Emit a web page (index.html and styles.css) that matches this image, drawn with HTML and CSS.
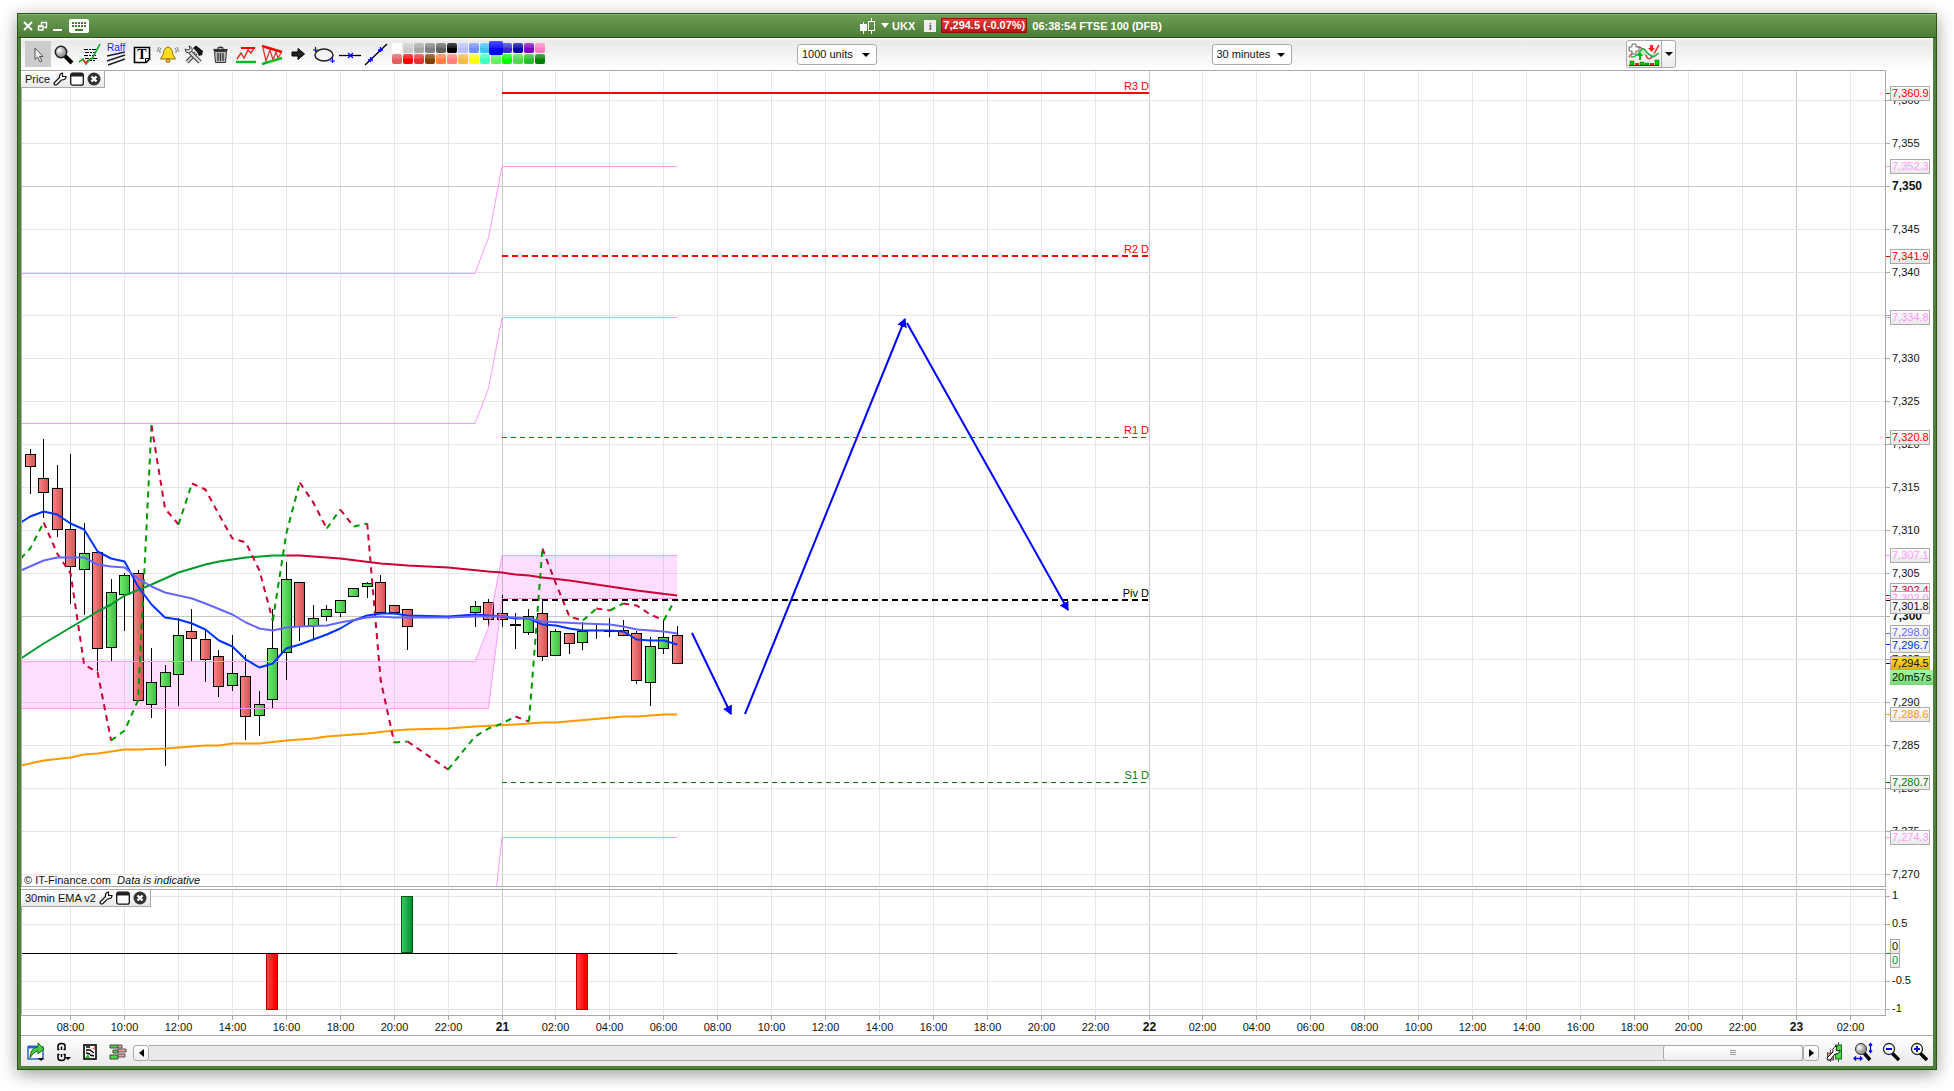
FILE: index.html
```html
<!DOCTYPE html>
<html lang="en">
<head>
<meta charset="utf-8">
<title>UKX 7,294.5 (-0.07%) FTSE 100 (DFB)</title>
<link rel="stylesheet" href="styles.css">
</head>
<body>
<svg class="defs" width="0" height="0" aria-hidden="true">
  <defs>
    <linearGradient id="candle-down"><stop offset="0" stop-color="#f98585"/><stop offset="1" stop-color="#d25252"/></linearGradient>
    <linearGradient id="candle-up"><stop offset="0" stop-color="#70ec70"/><stop offset="1" stop-color="#3fbd3f"/></linearGradient>
    <linearGradient id="bar-down"><stop offset="0.2" stop-color="#ff3838"/><stop offset="0.8" stop-color="#ff0000"/></linearGradient>
    <linearGradient id="bar-up"><stop offset="0" stop-color="#34cf62"/><stop offset="1" stop-color="#008a2c"/></linearGradient>
    <linearGradient id="tag" x2="0" y2="1"><stop offset="0" stop-color="#ffffff"/><stop offset="1" stop-color="#e8e8e8"/></linearGradient>
    <linearGradient id="tag-last" x2="0" y2="1"><stop offset="0" stop-color="#ffe030"/><stop offset="1" stop-color="#e8a800"/></linearGradient>
    <linearGradient id="tag-time" x2="0" y2="1"><stop offset="0" stop-color="#a0f8a0"/><stop offset="1" stop-color="#78d878"/></linearGradient>
    <radialGradient id="glass" cx="0.35" cy="0.35"><stop offset="0" stop-color="#fff"/><stop offset="1" stop-color="#999"/></radialGradient>
    <marker id="arrow" markerUnits="userSpaceOnUse" markerWidth="12" markerHeight="12" refX="8" refY="5" orient="auto"><path d="M0 0L9 5L0 10z" fill="#00f"/></marker>
    <symbol id="i-wrench" viewBox="0 0 14 14"><path d="M1.500 12.500Q.5 11.500 1.500 10.500L6.500 5.500Q6 1.500 9.500 1V4.500H13Q13 8 8.500 8L4 12.500Q2.500 13.500 1.500 12.500z" fill="#fff" stroke="#111" stroke-width="1.200"/></symbol>
    <symbol id="i-panel" viewBox="0 0 14 14"><rect x=".7" y="1.200" width="12.600" height="12" rx="2" fill="#fff" stroke="#111" stroke-width="1.300"/><path d="M1 1H13V4.500H1z" fill="#222"/></symbol>
    <symbol id="i-close" viewBox="0 0 14 14"><circle cx="7" cy="7" r="6.500" fill="#333"/><path d="M4.500 4.500L9.500 9.500M9.500 4.500L4.500 9.500" stroke="#fff" stroke-width="2.400"/></symbol>
  </defs>
</svg>

<main class="window">
  <header class="titlebar">
    <div class="win-buttons">
      <button aria-label="Close"><svg width="12" height="12"><path d="M2 2L10 10M10 2L2 10" stroke="#fff" stroke-width="2"/></svg></button>
      <button aria-label="Restore"><svg width="12" height="12"><path d="M4.500 5V2.500H9.500V7.500H7M1.500 6H6V10H1.500zM1 6.500H6.500M4 2.500H10" fill="none" stroke="#fff" stroke-width="1.400"/></svg></button>
      <button aria-label="Minimise"><svg width="12" height="12"><path d="M1 10H10" stroke="#fff" stroke-width="2"/></svg></button>
      <button aria-label="Keyboard" class="wide"><svg width="20" height="14"><rect width="20" height="14" rx="2" fill="#fff"/><path d="M3 4H17M3 7H17" stroke="#4a7a34" stroke-width="2" stroke-dasharray="2 1"/><path d="M6 11H14" stroke="#4a7a34" stroke-width="2"/></svg></button>
    </div>
    <div class="instrument">
      <svg class="candles" width="16" height="16"><rect x="0" y="6" width="7" height="7" fill="#fff"/><path d="M3.500 4V16M11.500 0V3M11.500 13V16" stroke="#fff"/><rect x="8.500" y="3.500" width="6" height="9" fill="none" stroke="#fff"/></svg>
      <svg class="caret" width="8" height="5"><path d="M0 0H8L4 5z" fill="#fff"/></svg>
      <strong class="ticker">UKX</strong>
      <button class="info" aria-label="Information">i</button>
      <span class="quote">7,294.5 (-0.07%)</span>
      <span class="name">06:38:54 FTSE 100 (DFB)</span>
    </div>
  </header>

  <div class="toolbar">
    <div class="tools">
      <button class="active" aria-label="Pointer"><svg width="24" height="24"><path d="M9 6V17.500L11.500 15L14 20L16 19L13.500 14.500H17z" fill="#eee" stroke="#555"/></svg></button>
      <button aria-label="Zoom"><svg width="24" height="24"><path d="M13 14L20 21" stroke="#000" stroke-width="4"/><circle cx="9" cy="10" r="5.700" fill="url(#glass)" stroke="#222" stroke-width="1.500"/></svg></button>
      <button aria-label="Indicator"><svg width="24" height="24"><path d="M6 7.500H19M7 10.500H17M6 13.500H19M7 16.500H19M10 18.500H18" stroke="#000" stroke-width="1.200" stroke-dasharray="4 1 2 1"/><path d="M1 20L5 17L8 22L12 17H14L22 2" fill="none" stroke="#10b030" stroke-width="1.600"/><path d="M5 18L8 21L10 18" fill="none" stroke="#f22" stroke-width="1.500"/></svg></button>
      <button aria-label="Raff channel"><svg width="24" height="24"><text class="raff" x="3" y="9">Raff</text><path d="M3 14L21 10M3 19L21 13M4 23L21 17" stroke="#222" stroke-width="1.500"/></svg></button>
      <button aria-label="Text"><svg width="24" height="24"><path d="M4.500 5.500H19.500V17L16 20.500H4.500z" fill="#fff" stroke="#000" stroke-width="1.600"/><path d="M15.500 20V16.500H19" fill="none" stroke="#000"/><text class="tee" x="12" y="17">T</text></svg></button>
      <button aria-label="Alert"><svg width="24" height="24"><path d="M12 5Q16.500 6 17 13L19.500 17H4.500L7 13Q7.500 6 12 5z" fill="#fd2" stroke="#9a7400"/><circle cx="12" cy="18.500" r="2" fill="#fb0" stroke="#864"/><path d="M5 6Q3 8 4 11M3 5Q1 8 2 10M19 6Q21 8 20 11M21 5Q23 8 22 10" fill="none" stroke="#777"/></svg></button>
      <button aria-label="Tools"><svg width="24" height="24"><path d="M14 11L5 20" stroke="#444" stroke-width="4"/><path d="M14 11L5 20" stroke="#ccc" stroke-width="2"/><path d="M11 6L14 3.500L21 9L20 13L17 14L15 10z" fill="#111"/><path d="M8 10L18 20" stroke="#444" stroke-width="4.500"/><path d="M8 10L18 20" stroke="#ddd" stroke-width="2.300"/><path d="M3 7Q3 11 7 11L10 9Q11 5 7 4L8 7L6 8z" fill="#ddd" stroke="#444"/></svg></button>
      <button aria-label="Delete"><svg width="24" height="24"><path d="M6.500 9.500H18.500L17.500 20.500H7.500z" fill="#bbb" stroke="#333"/><path d="M5.500 8H19.500" stroke="#333" stroke-width="2.200"/><path d="M9.500 6.500Q12.500 4 15.500 6.500M10 11V19M12.500 11V19M15 11V19" fill="none" stroke="#333" stroke-width="1.300"/></svg></button>
      <button aria-label="Patterns"><svg width="24" height="24"><path d="M3 17L7 11L10 16L14 8L17 11L20 6" fill="none" stroke="#e22" stroke-width="1.400"/><path d="M7 6H21" stroke="#f00" stroke-width="2"/><path d="M2 20H22" stroke="#0b2" stroke-width="2.400"/></svg></button>
      <button aria-label="Triangle patterns"><svg width="24" height="24"><path d="M3 6L6 19L10 8L13 18L16 10L18 16L21 11" fill="none" stroke="#e33" stroke-width="1.300"/><path d="M2 4L22 10" stroke="#f00" stroke-width="2.400"/><path d="M2 22L22 16" stroke="#0b2" stroke-width="2.400"/></svg></button>
      <button aria-label="Arrow"><svg width="24" height="24"><path d="M6 10H12V6.500L18.500 12L12 17.500V14H6z" fill="#222" stroke="#000"/></svg></button>
      <button aria-label="Ellipse"><svg width="24" height="24"><ellipse cx="12" cy="13" rx="9" ry="6" fill="none" stroke="#222" stroke-width="1.500"/><path d="M1 8H6M3.500 5V10M18 19H23M20.500 16V21" stroke="#00f" stroke-width="1.200"/></svg></button>
      <button aria-label="Horizontal line"><svg width="24" height="24"><path d="M1 13.500H23" stroke="#000" stroke-width="1.300"/><path d="M10 11L15 16M15 11L10 16" stroke="#00f" stroke-width="1.200"/></svg></button>
      <button aria-label="Trend line"><svg width="24" height="24"><path d="M1 23L23 2" stroke="#000" stroke-width="1.400"/><path d="M4 18H9M6.500 15V20M14 8H19M16.500 5V10" stroke="#00f" stroke-width="1.300"/></svg></button>
    </div>
    <div class="palette" id="palette"></div>
    <span class="gap3"></span>
    <label class="drop"><select aria-label="Number of units"><option>1000 units</option></select></label>
    <span class="gap4"></span>
    <label class="drop"><select aria-label="Timeframe"><option>30 minutes</option></select></label>
    <span class="gap4"></span>
    <div class="split">
      <button aria-label="Add indicator"><svg width="32" height="24"><path d="M1 15L10 5Q15 5 18 13Q20 20 25 14Q28 8 31 3" fill="none" stroke="#d44" stroke-width="1.600"/><path d="M3 15Q9 15 13 8Q15 5 18 9Q23 16 27 14L31 11" fill="#bfe8bf" stroke="#2a4" stroke-width="1.400"/><path d="M11 18V14H9L12 10L15 14H13V18z" fill="#0b0"/><path d="M22 3H25V6H27L23.500 10L20 6H22z" fill="#f22"/><path d="M4 2H8V5H11V9H8V12H4V9H1V5H4z" fill="#fff" stroke="#666"/><path d="M2 19H6V23H2zM12 20H16V23H12zM17 21H21V23H17zM27 18H31V23H27z" fill="#0c0" stroke="#060" stroke-width=".5"/><path d="M7 21H11V23H7zM22 21H26V23H22z" fill="#d22"/><path d="M1 23.500H31" stroke="#22f"/></svg></button>
      <button aria-label="More indicators" class="more"><svg width="8" height="4"><path d="M0 0H8L4 4z"/></svg></button>
    </div>
    <span class="gap3"></span>
  </div>

  <section class="pane price">
    <svg class="plot" id="price" role="img" aria-label="Price chart"></svg>
    <div class="tab"><span>Price</span>
      <button aria-label="Price settings"><svg width="14" height="14"><use href="#i-wrench"/></svg></button>
      <button aria-label="Detach price"><svg width="14" height="14"><use href="#i-panel"/></svg></button>
      <button aria-label="Close price"><svg width="14" height="14"><use href="#i-close"/></svg></button>
    </div>
    <p class="credit">© IT-Finance.com&nbsp; <em>Data is indicative</em></p>
  </section>
  <section class="pane signal">
    <svg class="plot" id="signal" role="img" aria-label="30min EMA v2"></svg>
    <div class="tab"><span>30min EMA v2</span>
      <button aria-label="EMA settings"><svg width="14" height="14"><use href="#i-wrench"/></svg></button>
      <button aria-label="Detach EMA"><svg width="14" height="14"><use href="#i-panel"/></svg></button>
      <button aria-label="Close EMA"><svg width="14" height="14"><use href="#i-close"/></svg></button>
    </div>
  </section>
  <section class="pane times">
    <svg class="plot" id="times" role="img" aria-label="Time axis"></svg>
  </section>

  <footer class="bottombar">
    <div class="left">
      <button aria-label="Export"><svg width="20" height="20"><rect x="2" y="5" width="15" height="12" fill="#fff" stroke="#26c" stroke-width="1.500"/><path d="M2 5H11" stroke="#26c" stroke-width="3"/><path d="M4 16Q4 6 12 5V1L18 7L12 12V9Q8 9 4 16z" fill="#4c4" stroke="#186818"/><path d="M12 16H18L15 19z"/></svg></button>
      <button aria-label="Link"><svg width="20" height="20"><path d="M6.500 7.500H5V4Q5 1.500 8.500 1.500T12 4V7.500H10.500M6.500 12.500H5V16Q5 18.500 8.500 18.500T12 16V12.500H10.500M8.500 4.500V8M8.500 12V15" fill="none" stroke="#000" stroke-width="1.500"/><path d="M12 15H18L15 18z"/></svg></button>
      <button aria-label="News"><svg width="20" height="20"><rect x="4" y="3" width="12" height="14" fill="#fff" stroke="#000" stroke-width="1.600"/><path d="M9 5L12 7L15 4L15 8z" fill="#f66"/><path d="M5 16L8 12L10 16z" fill="#3b3"/><path d="M6 5H10M6 8L10 8L14 11M6 11L10 12M10 13L14 14" stroke="#000" stroke-width="1.400" fill="none"/></svg></button>
      <button aria-label="Order book"><svg width="20" height="20"><path d="M3 3H11V6H3zM6 8H11V11H6zM3 13H11V17H3z" fill="#4d4" stroke="#444"/><path d="M11 3H15V6H11zM11 7H19V10H11zM11 12H18V15H11z" fill="#f99" stroke="#555"/></svg></button>
    </div>
    <div class="scroll">
      <button aria-label="Scroll left"><svg width="5" height="8"><path d="M5 0V8L0 4z"/></svg></button>
      <div class="track"><div class="thumb"><svg width="6" height="6"><path d="M0 .5H6M0 2.500H6M0 4.500H6" stroke="#999"/></svg></div></div>
      <button aria-label="Scroll right"><svg width="5" height="8"><path d="M0 0V8L5 4z"/></svg></button>
    </div>
    <div class="right">
      <button aria-label="Chart settings"><svg width="20" height="20"><path d="M5.500 8V20M13.500 0V20" stroke="#555"/><rect x="2.500" y="11" width="6" height="7" fill="#d77" stroke="#555"/><rect x="10.500" y="3" width="6" height="14" fill="#4d4" stroke="#262"/><path d="M3 18L2 16L8 10Q7 5 12 4L11 8L13 9L15 8Q15 12 10 12L5 18z" fill="#fff" stroke="#111"/></svg></button>
      <button aria-label="Fit"><svg width="20" height="20"><path d="M11 11L17 18" stroke="#000" stroke-width="3.500"/><circle cx="8" cy="7" r="5.500" fill="url(#glass)" stroke="#333"/><path d="M17.500 2V10M16 3.500L17.500 1.500L19 3.500M16 8.500L17.500 10.500L19 8.500M1 16.500H9M3 14.500L1 16.500L3 18.500M7 14.500L9 16.500L7 18.500" fill="none" stroke="#00f" stroke-width="1.300"/></svg></button>
      <button aria-label="Zoom out"><svg width="20" height="20"><path d="M11 11L18 18" stroke="#000" stroke-width="3.500"/><circle cx="8" cy="7" r="5.500" fill="#fff" stroke="#222" stroke-width="1.300"/><path d="M5 7H11" stroke="#00f" stroke-width="2"/></svg></button>
      <button aria-label="Zoom in"><svg width="20" height="20"><path d="M11 11L18 18" stroke="#000" stroke-width="3.500"/><circle cx="8" cy="7" r="5.500" fill="#fff" stroke="#222" stroke-width="1.300"/><path d="M5 7H11M8 4V10" stroke="#00f" stroke-width="2"/></svg></button>
    </div>
  </footer>
</main>
<script src="chart.js"></script>
</body>
</html>
```
FILE: styles.css
```css
* { box-sizing: border-box; }

body {
  margin: 0;
  min-height: 100vh;
  padding: 13px 17px 21px;
  display: flex;
  background: #fff;
  color: #111;
  font: 11px/14px "Liberation Sans", Arial, sans-serif;
}

button {
  display: flex;
  align-items: center;
  justify-content: center;
  padding: 0;
  border: 0;
  background: none;
  font: inherit;
  color: inherit;
}

svg { display: block; flex: none; }
.defs { position: absolute; }

.window {
  flex: 1;
  min-width: 0;
  display: flex;
  flex-direction: column;
  padding: 0 3px 3px;
  border: 1px solid #2a5715;
  background: #50813a;
  box-shadow: 0 4px 16px rgba(0, 0, 0, 0.4);
}

/* title bar */
.titlebar {
  display: flex;
  align-items: center;
  height: 24px;
  margin: 0 -3px;
  padding: 0 3px 1px;
  border-top: 1px solid #84b36c;
  border-bottom: 1px solid #2a5715;
  background: linear-gradient(#6c9d55, #4d7c36);
  color: #fff;
  font-weight: bold;
}
.win-buttons { display: flex; gap: 3px; padding-left: 1px; }
.win-buttons .wide { margin-left: 2px; }
.instrument {
  flex: 1;
  display: flex;
  align-items: center;
  justify-content: center;
}
.caret { margin: 0 3px 0 5px; }
.ticker { margin-right: 9px; }
.info {
  width: 12px;
  height: 12px;
  margin-right: 5px;
  background: #eee;
  color: #666;
  font: bold 11px/12px "Liberation Serif", serif;
}
.quote {
  height: 15px;
  margin-right: 5px;
  padding: 0 1px;
  border: 1px solid #980c0c;
  background: linear-gradient(#e63c3c, #b81414);
  line-height: 13px;
}

/* tool bar */
.toolbar {
  display: flex;
  align-items: center;
  height: 32px;
  padding: 0 6px 0 4px;
  background: linear-gradient(#fff, #e9e9e9 10%, #fff);
}
.tools { display: flex; }
.tools button { width: 26px; height: 26px; }
.tools .active { background: #ccc; }
.raff { font: 10px "Liberation Sans", Arial, sans-serif; fill: #22f; }
.tee { font: bold 14px "Liberation Serif", serif; text-anchor: middle; }
.palette {
  display: grid;
  grid-template-columns: repeat(14, 11px);
  grid-auto-rows: 11px;
  margin-left: 3px;
}
.palette button {
  width: 10px;
  height: 10px;
  border-radius: 2px;
  background-image: linear-gradient(rgba(255, 255, 255, 0.3), rgba(255, 255, 255, 0.1) 50%, transparent 50%);
}
.palette .picked {
  width: 14px;
  height: 14px;
  margin: -2px;
  z-index: 1;
}
.gap3 { flex: 3; }
.gap4 { flex: 4; }
.drop { position: relative; }
.drop select {
  appearance: none;
  width: 80px;
  height: 21px;
  padding: 0 4px;
  border: 1px solid #aaa;
  border-radius: 3px;
  background: #fff;
  font: inherit;
  color: inherit;
}
.drop::after {
  content: "";
  position: absolute;
  right: 7px;
  top: 9px;
  border: 4px solid transparent;
  border-top-color: #000;
  border-bottom: 0;
}
.split {
  display: flex;
  height: 28px;
  border: 1px solid #aaa;
  border-radius: 3px;
  background: linear-gradient(#fff, #ededed);
}
.split button { width: 34px; }
.split .more { width: 14px; border-left: 1px solid #aaa; }

/* charts */
.pane { position: relative; background: #fff; }
.pane .plot { position: absolute; width: 100%; height: 100%; }
.price { flex: 1; min-height: 400px; }
.signal { height: 129px; padding-top: 2px; }
.signal .plot { height: 127px; }
.times { height: 20px; border-bottom: 1px solid #aaa; }

.tab {
  position: absolute;
  left: 0;
  top: 1px;
  display: flex;
  align-items: center;
  gap: 3px;
  height: 17px;
  padding: 0 3px 1px 4px;
  border: solid #aaa;
  border-width: 0 1px 1px 0;
  background: linear-gradient(#fff, #e8e8e8);
}
.signal .tab { top: 3px; }
.credit { position: absolute; left: 3px; bottom: 0; margin: 0; }

.plot text { fill: #111; }
.plot .major { font-weight: bold; font-size: 12px; }
.grid, .grid-major, .frame, .tick { shape-rendering: crispEdges; fill: none; }
.grid { stroke: #e6e6e6; }
.grid-major { stroke: #c8c8c8; }
.frame, .tick { stroke: #aaa; }

/* bottom bar */
.bottombar {
  display: flex;
  align-items: center;
  height: 30px;
  padding-top: 2px;
  background: linear-gradient(#fff, #e9e9e9);
}
.left, .right, .scroll { display: flex; }
.left { margin-right: 3px; padding-left: 1px; }
.left button { width: 27px; height: 24px; }
.right { margin-left: 2px; }
.right button { width: 28px; height: 24px; }
.scroll { flex: 1; height: 16px; margin-top: 2px; }
.scroll button {
  width: 16px;
  border: 1px solid #aaa;
  border-radius: 3px;
  background: linear-gradient(#fff, #eee);
}
.track {
  flex: 1;
  display: flex;
  justify-content: flex-end;
  border: solid #aaa;
  border-width: 1px 0;
  background: #e9e9e9;
}
.thumb {
  display: flex;
  align-items: center;
  justify-content: center;
  width: 140px;
  margin: -1px 0;
  border: 1px solid #aaa;
  border-radius: 3px;
  background: linear-gradient(#fff, #eee);
}
```
FILE: chart.js
```js
// Colour palette of the drawing tools
const COLOURS = ['#fff', '#ccc', '#a8a8a8', '#808080', '#606060', '#000', '#b8c0ff', '#7090ff', '#40c0ff', '#00f', '#3030d0', '#0000a0', '#8000c0', '#ff80c0',
  '#e06060', '#f00', '#e83030', '#804000', '#ff8040', '#ff8080', '#ffb840', '#ff0', '#40ffc0', '#60f060', '#0f0', '#50d850', '#30b830', '#008000'];
document.getElementById('palette').innerHTML = COLOURS.map((c, i) =>
  `<button class="${i === 9 ? 'picked' : ''}" aria-label="${c}" style="background-color:${c}"></button>`).join('');

// Bars are half hours counted from midnight of the 21st.
const STEP = 13.48;
const MIDNIGHT = 481;
const AXIS = 48;
const TOP = 70;
const x = k => MIDNIGHT + k * STEP;
const column = k => Math.floor(x(k)) + 0.5;
const y = row => row - TOP;
const priceY = p => Math.round(546 + (7300 - p) * 8.592);

// bar, high, body top, body bottom, low, up (1) or down (0)
const CANDLES = [
  [-35,449,454,466,493,0],[-34,439,478,492,517,0],[-33,465,488,529,536,0],[-32,454,529,566,603,0],
  [-31,523,553,569,614,1],[-30,552,552,648,670,0],[-29,579,592,647,660,1],[-28,573,575,594,630,1],
  [-27,570,573,700,700,0],[-26,648,682,704,717,1],[-25,665,672,686,765,1],[-24,618,635,674,705,1],
  [-23,609,631,638,661,0],[-22,631,639,659,681,0],[-21,650,656,686,696,0],[-20,635,673,685,690,1],
  [-19,655,676,716,739,0],[-18,691,704,715,735,1],[-17,609,648,699,708,1],[-16,562,579,652,679,1],
  [-15,582,582,626,640,0],[-14,605,618,625,639,1],[-13,605,609,616,620,1],[-12,600,600,612,616,1],
  [-11,588,588,596,596,1],[-10,582,583,586,597,1],[-9,575,582,612,612,0],[-8,605,605,612,612,0],
  [-7,609,609,626,649,0],[-4,618,618,618,618,1],[-2,601,606,612,626,1],[-1,599,602,619,626,0],
  [0,595,613,619,626,0],[1,613,624,625,648,1],[2,609,616,632,634,1],[3,600,613,656,660,0],
  [4,629,631,655,655,1],[5,633,633,643,653,0],[6,622,631,642,649,1],[7,624,629,629,638,1],
  [8,618,630,631,636,1],[9,620,630,635,635,0],[10,631,633,680,683,0],[11,637,646,682,705,1],
  [12,620,637,648,653,1],[13,626,635,663,663,0]
];
const FAST = [[-35.7,522],[-35,516],[-34,511],[-33,514],[-32,523],[-31,529],[-30,551],[-29,558],[-28,561],[-27,586],[-26,604],[-25,617],[-24,619],[-23,623],[-22,629],[-21,640],[-20,646],[-19,659],[-18,667],[-17,663],[-16,648],[-15,644],[-14,639],[-13,634],[-12,628],[-11,620],[-10,615],[-9,613],[-8,613],[-7,615],[-4,616],[-2,614],[-1,615],[0,616],[1,618],[2,618],[3,624],[4,625],[5,628],[6,630],[8,630],[9,631],[10,639],[11,640],[12,640],[13,644]];
const SLOW = [[-35.7,570],[-34,560],[-33,557],[-31,557],[-30,564],[-29,566],[-28,567],[-27,578],[-26,586],[-25,592],[-23,598],[-22,603],[-20,614],[-19,622],[-18,628],[-17,630],[-16,627],[-15,626],[-13,625],[-12,622],[-10,617],[-9,616],[-8,617],[-4,617],[-2,616],[0,616],[1,617],[2,618],[3,621],[6,623],[8,624],[9,626],[10,629],[12,631],[13,633]];
const TREND_UP = [[-35.7,658],[-34,643],[-33,635],[-32,627],[-30,611],[-29,604],[-28,595],[-26,584],[-25,578],[-24,572],[-23,568],[-22,564],[-21,561],[-20,559],[-19,557],[-17,555],[-16,555]];
const TREND_DOWN = [[-16,555],[-15,555],[-12,558],[-9,563],[-8,564],[-7,565],[-4,567],[-1,571],[0,572],[1,574],[2,575],[3,577],[5,580],[6,582],[9,588],[10,590],[13,595]];
const LONG = [[-35.7,765],[-34,760],[-32,757],[-31,754],[-30,753],[-28,749],[-27,749],[-25,748],[-24,747],[-22,745],[-21,745],[-20,743],[-18,743],[-16,740],[-14,738],[-13,736],[-10,733],[-8,730],[-7,729],[-4,728],[-2,726],[1,724],[3,722],[4,722],[9,716],[10,716],[12,714],[13,714]];
const SWING = [[-35.7,558],[-35,548],[-34,522],[-33,553],[-32,573],[-31,664],[-30,672],[-29,740],[-28,730],[-27,700],[-26,425],[-25,508],[-24,524],[-23,483],[-22,489],[-21,514],[-20,538],[-19,542],[-18,570],[-17,620],[-16,533],[-15,482],[-14,502],[-13,528],[-12,509],[-11,526],[-10,523],[-9,680],[-8,742],[-7,741],[-4,769],[-2,736],[-1,728],[0,723],[1,716],[2,721],[3,548],[4,583],[5,616],[6,620],[7,608],[8,610],[9,603],[10,605],[11,614],[12,620],[12.8,600]];
const BAND_TOP = [[-35.7,661],[-2,661],[-1,627],[0,555],[13,555]];
const BAND_BOTTOM = [[-35.7,708],[-1,708],[0,598],[13,598]];
const PINK = [BAND_TOP, BAND_BOTTOM,
  [[-35.7,273],[-2,273],[-1,237],[0,166],[13,166]],
  [[-35.7,423],[-2,423],[-1,388],[0,317],[13,317]],
  [[-0.4,886],[0,837],[13,837]]];
// label, row, colour, thickness, dash pattern
const PIVOTS = [['R3 D',93,'#f00',2,''],['R2 D',256,'#f00',2,'6 4'],['R1 D',437,'#f00',1,'5 4'],['Piv D',600,'#000',2,'6 4'],['S1 D',782,'#008000',1,'5 4']];
const ARROWS = [[692,633,731,714],[745,714,905,319],[907,323,1068,610]];
// text, box row, tick row, colour
const TAGS = [['7,360.9',86,93,'#f00'],['7,352.3',159,166,'#f9f'],['7,341.9',249,256,'#f00'],['7,334.8',310,317,'#f9f'],
  ['7,320.8',430,437,'#f00'],['7,307.1',548,555,'#f9f'],['7,302.4',583,595,'#c8003c'],['7,302.0',591,598,'#f9f'],
  ['7,301.8',599,600,'#111'],['7,298.0',625,633,'#6a6aff'],['7,296.7',638,644,'#0030ff'],['7,294.5',656,663,'#111','tag-last'],
  ['7,288.6',707,714,'#ff9900'],['7,280.7',775,782,'#008000'],['7,274.3',830,837,'#f9f']];

const points = list => list.map(([k, r]) => `${x(k).toFixed(1)},${y(r) + 0.5}`).join(' ');
const poly = (list, colour, width, dash) =>
  `<polyline points="${points(list)}" fill="none" stroke="${colour}" stroke-width="${width}" stroke-linejoin="round"${dash ? ` stroke-dasharray="${dash}"` : ''}/>`;
const line = (cls, x1, y1, x2, y2, extra = '') =>
  `<path class="${cls}" d="M${x1} ${y1}L${x2} ${y2}" ${extra}/>`;
const tag = (left, top, width, text, colour, fill = 'tag') =>
  `<rect x="${left + 0.5}" y="${top + 0.5}" width="${width}" height="14" fill="url(#${fill})" stroke="#aaa"/>` +
  `<text x="${left + 2}" y="${top + 11}" style="fill:${colour}">${text}</text>`;

function verticals(right, height) {
  let out = '';
  for (let k = -32; x(k) < right; k += 4) {
    out += line(k % 48 === 0 ? 'grid-major' : 'grid', column(k), 0, column(k), height);
  }
  return out;
}

// Runs of rising and falling points get a colour each.
function swing() {
  let out = '', run = [SWING[0]], rising = true;
  for (let i = 1; i < SWING.length; i++) {
    const up = SWING[i][1] < SWING[i - 1][1];
    if (up !== rising) {
      out += poly(run, rising ? '#009a00' : '#cc0033', 2, '6 5');
      run = [SWING[i - 1]];
      rising = up;
    }
    run.push(SWING[i]);
  }
  return out + poly(run, rising ? '#009a00' : '#cc0033', 2, '6 5');
}

function drawPrice() {
  const svg = document.getElementById('price');
  const right = svg.clientWidth - AXIS;
  const height = svg.clientHeight;
  let out = verticals(right, height), labels = '';
  for (let p = 7360; p >= 7270; p -= 5) {
    const py = priceY(p) + 0.5, major = p % 50 === 0;
    out += line(major ? 'grid-major' : 'grid', 0, py, right, py);
    labels += line('tick', right, py, right + 5, py) +
      `<text x="${right + 7}" y="${py + 3.5}" class="${major ? 'major' : ''}">${p.toLocaleString('en-US')}</text>`;
  }
  out += `<polygon points="${points(BAND_TOP)} ${points([...BAND_BOTTOM].reverse())}" fill="rgba(255,0,255,0.13)"/>`;
  for (const [k, high, top, bottom, low, up] of CANDLES) {
    const cx = column(k);
    out += `<path d="M${cx} ${y(high)}V${y(low) + 1}" stroke="#000"/>` +
      `<rect x="${cx - 5}" y="${y(top) + 0.5}" width="10" height="${bottom - top}" fill="url(#candle-${up ? 'up' : 'down'})" stroke="#000"/>`;
  }
  out += PINK.map(l => poly(l, '#ff99ff', 1)).join('');
  out += poly(LONG, '#ff9900', 2) + poly(TREND_UP, '#00992e', 2) + poly(TREND_DOWN, '#cc0033', 2) + swing();
  for (const [name, row, colour, width, dash] of PIVOTS) {
    const py = y(row) + (width === 1 ? 0.5 : 0);
    out += line('', x(0), py, x(48), py, `stroke="${colour}" stroke-width="${width}" stroke-dasharray="${dash}"`) +
      `<text x="${x(48)}" y="${y(row) - 3}" text-anchor="end" style="fill:${colour}">${name}</text>`;
  }
  out += poly(FAST, '#0033ff', 2) + poly(SLOW, '#6666ff', 2);
  for (const [x1, y1, x2, y2] of ARROWS) {
    out += line('', x1 - 21, y(y1), x2 - 21, y(y2), 'stroke="#00f" stroke-width="2" marker-end="url(#arrow)"');
  }
  out += labels;
  for (const [text, row, at, colour, fill] of TAGS) {
    out += line('tick', right, y(at) + 0.5, right + 5, y(at) + 0.5, `style="stroke:${colour}"`) + tag(right + 5, y(row), 39, text, colour, fill);
  }
  out += `<rect x="${right + 5}" y="600" width="43" height="15" fill="url(#tag-time)"/><text x="${right + 7}" y="611">20m57s</text>`;
  out += `<path class="frame" d="M0 .5H${right + 0.5}V${height - 0.5}H.5V1"/>`;
  svg.innerHTML = out;
}

function drawSignal() {
  const svg = document.getElementById('signal');
  const right = svg.clientWidth - AXIS;
  let out = verticals(right, 127);
  for (const [value, row] of [['1', 7], ['0.5', 35], ['', 64], ['-0.5', 92], ['-1', 120]]) {
    out += line(value ? 'grid' : 'grid-major', 0, row + 0.5, right, row + 0.5) +
      line('tick', right, row + 0.5, right + 5, row + 0.5) +
      `<text x="${right + 7}" y="${row + 3}">${value}</text>`;
  }
  for (const [k, up] of [[-17, 0], [-7, 1], [6, 0]]) {
    out += `<rect x="${column(k) - 6}" y="${up ? 7.5 : 64.5}" width="11" height="56" fill="url(#bar-${up ? 'up' : 'down'})" stroke="${up ? '#005c14' : '#c00000'}"/>`;
  }
  out += line('', 0, 64.5, x(13), 64.5, 'stroke="#000"');
  out += line('tick', right, 64.5, right + 5, 64.5, 'style="stroke:#00992e"');
  out += tag(right + 5, 50, 9, '0', '#111') + tag(right + 5, 64, 9, '0', '#00992e');
  out += `<path class="frame" d="M0 .5H${right + 0.5}V126.500H.5V1"/>`;
  svg.innerHTML = out;
}

function drawTimes() {
  const svg = document.getElementById('times');
  const right = svg.clientWidth - AXIS;
  let out = '';
  for (let k = -32; x(k) < right; k += 4) {
    const px = column(k), day = k % 48 === 0;
    const hour = String((((k / 2) % 24) + 24) % 24).padStart(2, '0');
    out += line('tick', px, 0, px, 4) +
      `<text x="${px}" y="15" text-anchor="middle" class="${day ? 'major' : ''}">${day ? 21 + k / 48 : hour + ':00'}</text>`;
  }
  svg.innerHTML = out;
}

function draw() {
  drawPrice();
  drawSignal();
  drawTimes();
}
draw();
addEventListener('resize', draw);
```
